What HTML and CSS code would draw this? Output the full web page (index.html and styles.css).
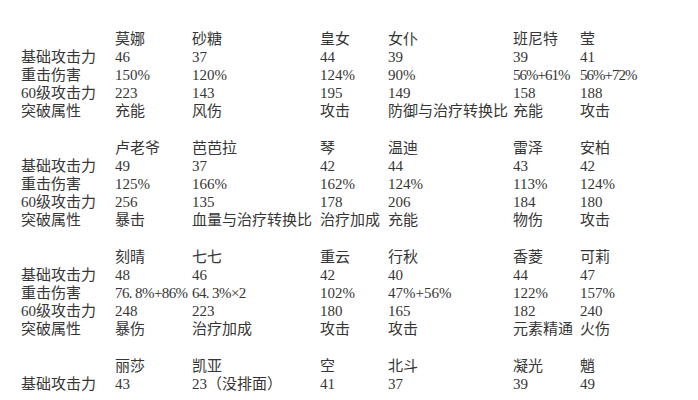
FILE: index.html
```html
<!DOCTYPE html>
<html lang="zh-CN">
<head>
<meta charset="utf-8">
<title>角色属性</title>
<link rel="stylesheet" href="styles.css">
</head>
<body>
<div class="sheet">
  <div class="block">
    <span></span><span>莫娜</span><span>砂糖</span><span>皇女</span><span>女仆</span><span>班尼特</span><span>莹</span>
    <span>基础攻击力</span><span>46</span><span>37</span><span>44</span><span>39</span><span>39</span><span>41</span>
    <span>重击伤害</span><span>150%</span><span>120%</span><span>124%</span><span>90%</span><span class="tighter">56%+61%</span><span class="tighter">56%+72%</span>
    <span>60级攻击力</span><span>223</span><span>143</span><span>195</span><span>149</span><span>158</span><span>188</span>
    <span>突破属性</span><span>充能</span><span>风伤</span><span>攻击</span><span>防御与治疗转换比</span><span>充能</span><span>攻击</span>
  </div>
  <div class="block">
    <span></span><span>卢老爷</span><span>芭芭拉</span><span>琴</span><span>温迪</span><span>雷泽</span><span>安柏</span>
    <span>基础攻击力</span><span>49</span><span>37</span><span>42</span><span>44</span><span>43</span><span>42</span>
    <span>重击伤害</span><span>125%</span><span>166%</span><span>162%</span><span>124%</span><span>113%</span><span>124%</span>
    <span>60级攻击力</span><span>256</span><span>135</span><span>178</span><span>206</span><span>184</span><span>180</span>
    <span>突破属性</span><span>暴击</span><span>血量与治疗转换比</span><span>治疗加成</span><span>充能</span><span>物伤</span><span>攻击</span>
  </div>
  <div class="block">
    <span></span><span>刻晴</span><span>七七</span><span>重云</span><span>行秋</span><span>香菱</span><span>可莉</span>
    <span>基础攻击力</span><span>48</span><span>46</span><span>42</span><span>40</span><span>44</span><span>47</span>
    <span>重击伤害</span><span class="tight">76. 8%+86%</span><span class="tight">64. 3%×2</span><span>102%</span><span>47%+56%</span><span>122%</span><span>157%</span>
    <span>60级攻击力</span><span>248</span><span>223</span><span>180</span><span>165</span><span>182</span><span>240</span>
    <span>突破属性</span><span>暴伤</span><span>治疗加成</span><span>攻击</span><span>攻击</span><span>元素精通</span><span>火伤</span>
  </div>
  <div class="block">
    <span></span><span>丽莎</span><span>凯亚</span><span>空</span><span>北斗</span><span>凝光</span><span>魈</span>
    <span>基础攻击力</span><span>43</span><span>23（没排面）</span><span>41</span><span>37</span><span>39</span><span>49</span>
  </div>
</div>
</body>
</html>
```
FILE: styles.css
```css
html, body {
  margin: 0;
  padding: 0;
  background: #ffffff;
}
body {
  width: 698px;
  height: 400px;
  overflow: hidden;
  font-family: "Liberation Serif", "Noto Sans CJK SC", serif;
  font-size: 15px;
  color: #363636;
}
.sheet {
  padding: 30px 0 0 21px;
}
.block {
  display: grid;
  grid-template-columns: 94px 77px 128px 68px 125px 67px 1fr;
  grid-auto-rows: 18px;
  line-height: 18px;
  margin-bottom: 19px;
  white-space: nowrap;
}
.tight {
  letter-spacing: -0.6px;
}
.tighter {
  letter-spacing: -1px;
}
```
